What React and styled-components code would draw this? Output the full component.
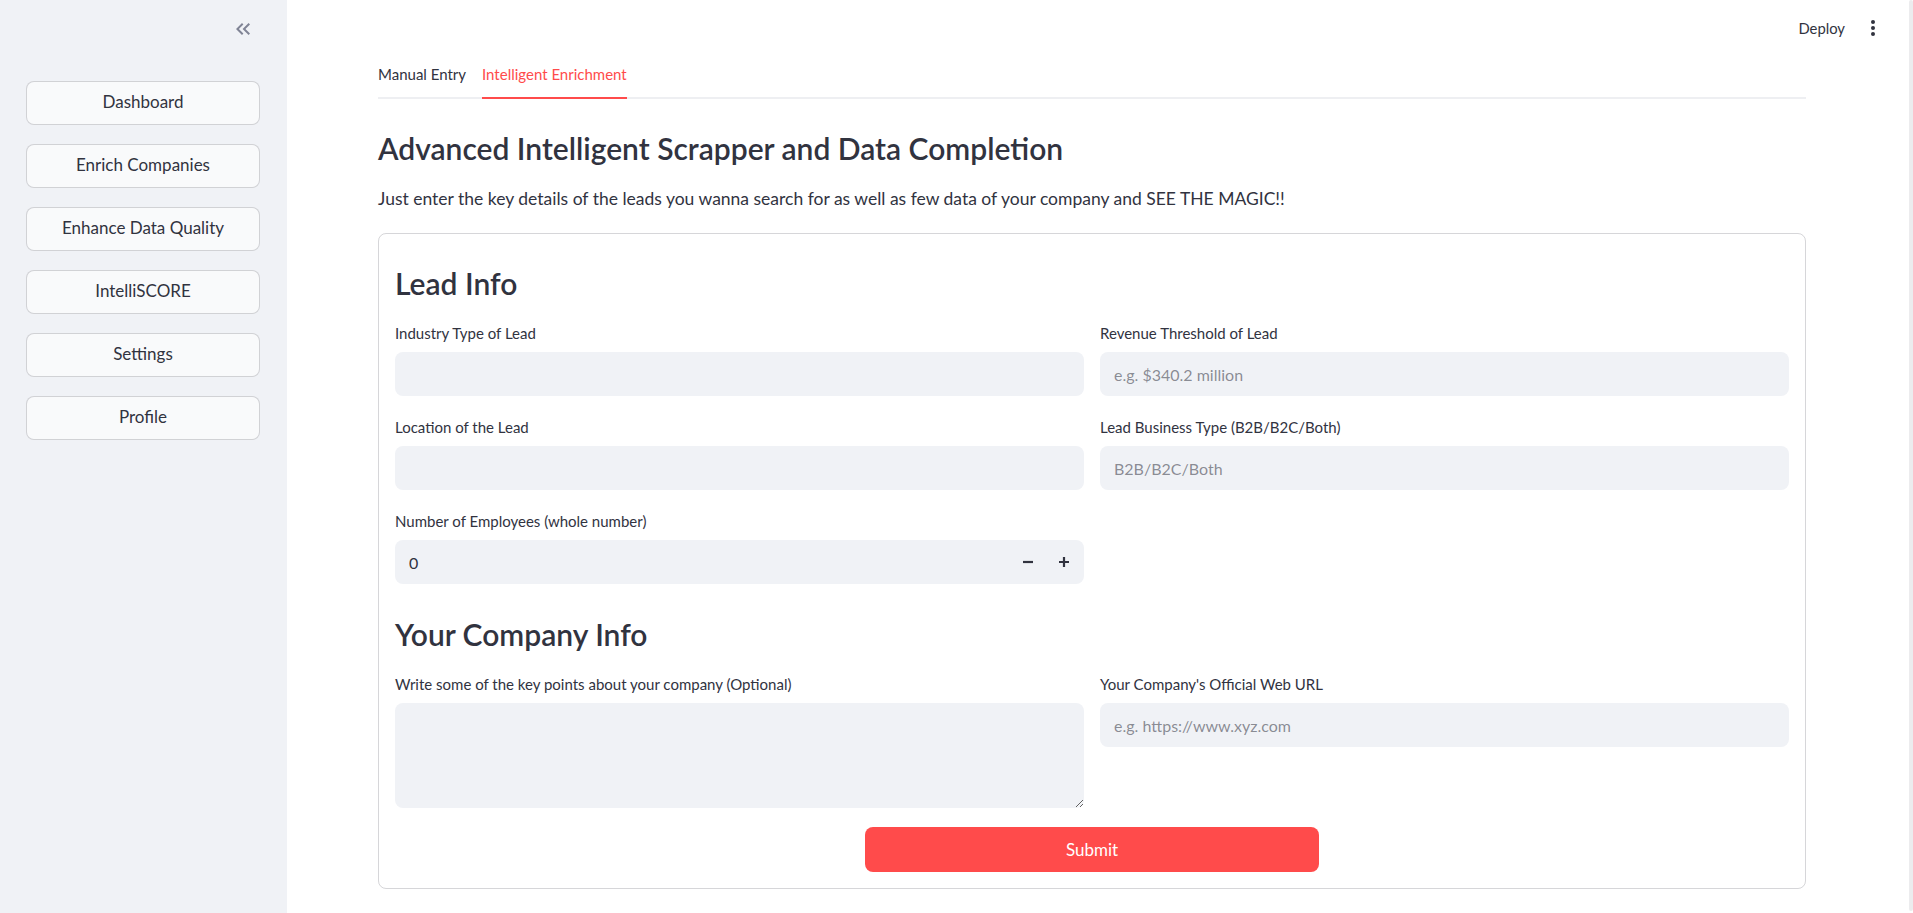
import styled, { createGlobalStyle } from 'styled-components';

const GlobalStyle = createGlobalStyle`
  html, body {
    margin: 0;
    padding: 0;
    background: #ffffff;
    overflow: hidden;
  }
  body {
    font-family: Lato, "Noto Sans", sans-serif;
    color: #31333f;
  }
  * { box-sizing: border-box; }
`;

const Shell = styled.div`
  display: flex;
  height: 100vh;
  overflow: hidden;
`;

const Sidebar = styled.aside`
  width: 287px;
  flex-shrink: 0;
  background: #f0f2f6;
  padding: 0 27px 0 26px;
  display: flex;
  flex-direction: column;
`;

const CollapseRow = styled.div`
  height: 81px;
  display: flex;
  justify-content: flex-end;
  align-items: flex-start;
  padding-top: 17px;
  padding-right: 5px;
`;

const IconButton = styled.button`
  border: none;
  background: transparent;
  padding: 0;
  display: flex;
  cursor: pointer;
  color: ${(p) => p.$color || '#808495'};
`;

const Nav = styled.nav`
  display: flex;
  flex-direction: column;
  gap: 19px;
`;

const NavButton = styled.button`
  height: 44px;
  width: 100%;
  background: #f9fafb;
  border: 1px solid rgba(49, 51, 63, 0.2);
  border-radius: 8px;
  font-family: inherit;
  font-size: 17px;
  line-height: 20px;
  padding: 0 0 2px;
  color: #31333f;
  cursor: pointer;
`;

const Main = styled.main`
  flex: 1;
  position: relative;
  display: flex;
  flex-direction: column;
  background: #ffffff;
`;

const Header = styled.header`
  height: 56px;
  display: flex;
  align-items: center;
  justify-content: flex-end;
  gap: 16px;
  padding-right: 28px;
`;

const DeployLink = styled.span`
  font-size: 14.8px;
  color: #31333f;
`;

const ScrollThumb = styled.div`
  position: absolute;
  right: 0;
  top: 0;
  bottom: 2px;
  width: 4px;
  border-radius: 2px;
  background: #ececee;
`;

const Content = styled.div`
  padding: 0 107px 0 91px;
  display: flex;
  flex-direction: column;
`;

const TabList = styled.div`
  height: 43px;
  display: flex;
  gap: 16px;
  border-bottom: 2px solid #eeeff2;
`;

const Tab = styled.div`
  height: 43px;
  display: flex;
  align-items: center;
  padding-bottom: 6px;
  margin-bottom: -2px;
  font-size: 15px;
  color: ${(p) => (p.$active ? '#ff4b4b' : '#31333f')};
  border-bottom: 2px solid ${(p) => (p.$active ? '#ff4b4b' : 'transparent')};
`;

const Title = styled.h2`
  margin: 31px 0 0;
  font-size: 30px;
  line-height: 36px;
  font-weight: 600;
  color: #31333f;
`;

const Lead = styled.p`
  margin: 20px 0 0;
  font-size: 17.5px;
  line-height: 26px;
`;

const Form = styled.form`
  margin-top: 21px;
  border: 1px solid rgba(49, 51, 63, 0.2);
  border-radius: 8px;
  padding: 16px;
  display: flex;
  flex-direction: column;
`;

const SectionTitle = styled.h3`
  margin: ${(p) => (p.$first ? '15px' : '32px')} 0 22px;
  font-size: 30px;
  line-height: 36px;
  font-weight: 600;
  color: #31333f;
`;

const Columns = styled.div`
  display: grid;
  grid-template-columns: 1fr 1fr;
  column-gap: 16px;
  align-items: start;
`;

const Column = styled.div`
  display: flex;
  flex-direction: column;
  gap: 21px;
`;

const Field = styled.label`
  display: flex;
  flex-direction: column;
`;

const Label = styled.span`
  font-size: 15px;
  line-height: 20px;
  margin-bottom: 9px;
  color: #31333f;
`;

const TextInput = styled.input`
  height: 44px;
  width: 100%;
  border: none;
  border-radius: 8px;
  background: #f0f2f6;
  padding: 0 14px;
  font-family: inherit;
  font-size: 16px;
  color: #31333f;
  outline: none;
  &::placeholder { color: rgba(49, 51, 63, 0.55); }
`;

const NumberBox = styled.div`
  height: 44px;
  display: flex;
  align-items: center;
  border-radius: 8px;
  background: #f0f2f6;
  padding: 0 2px 0 14px;
`;

const NumberValue = styled.input`
  flex: 1;
  border: none;
  background: transparent;
  font-family: inherit;
  font-size: 16px;
  color: #31333f;
  outline: none;
  padding: 0;
`;

const StepButton = styled.button`
  width: 36px;
  height: 44px;
  border: none;
  background: transparent;
  display: flex;
  align-items: center;
  justify-content: center;
  color: #31333f;
  padding: 0;
`;

const TextArea = styled.textarea`
  height: 105px;
  width: 100%;
  border: none;
  border-radius: 8px;
  background: #f0f2f6;
  padding: 12px 14px;
  font-family: inherit;
  font-size: 16px;
  color: #31333f;
  outline: none;
  resize: vertical;
`;

const SubmitRow = styled.div`
  margin-top: 19px;
  display: grid;
  grid-template-columns: 1fr 1fr 1fr;
  column-gap: 16px;
`;

const SubmitButton = styled.button`
  grid-column: 2;
  height: 45px;
  border: none;
  border-radius: 8px;
  background: #ff4b4b;
  color: #ffffff;
  font-family: inherit;
  font-size: 17px;
  cursor: pointer;
`;

const navItems = ['Dashboard', 'Enrich Companies', 'Enhance Data Quality', 'IntelliSCORE', 'Settings', 'Profile'];

function DoubleChevron() {
  return (
    <svg width="24" height="24" viewBox="0 0 24 24" fill="currentColor">
      <path d="M17.59 18L19 16.59 14.42 12 19 7.41 17.59 6l-6 6z" />
      <path d="M11 18l1.41-1.41L7.83 12l4.58-4.59L11 6l-6 6z" />
    </svg>
  );
}

function MoreVert() {
  return (
    <svg width="24" height="24" viewBox="0 0 24 24" fill="currentColor">
      <circle cx="12" cy="6" r="2" />
      <circle cx="12" cy="12" r="2" />
      <circle cx="12" cy="18" r="2" />
    </svg>
  );
}

function Minus() {
  return (
    <svg width="12" height="12" viewBox="0 0 12 12">
      <path d="M1 6h10" stroke="currentColor" strokeWidth="2.2" />
    </svg>
  );
}

function Plus() {
  return (
    <svg width="12" height="12" viewBox="0 0 12 12">
      <path d="M1 6h10M6 1v10" stroke="currentColor" strokeWidth="2.2" />
    </svg>
  );
}

export default function App() {
  return (
    <>
      <GlobalStyle />
      <Shell>
        <Sidebar>
          <CollapseRow>
            <IconButton aria-label="Collapse sidebar">
              <DoubleChevron />
            </IconButton>
          </CollapseRow>
          <Nav>
            {navItems.map((item) => (
              <NavButton key={item}>{item}</NavButton>
            ))}
          </Nav>
        </Sidebar>

        <Main>
          <Header>
            <DeployLink>Deploy</DeployLink>
            <IconButton $color="#31333f" aria-label="Menu">
              <MoreVert />
            </IconButton>
          </Header>

          <Content>
            <TabList>
              <Tab>Manual Entry</Tab>
              <Tab $active>Intelligent Enrichment</Tab>
            </TabList>

            <Title>Advanced Intelligent Scrapper and Data Completion</Title>
            <Lead>
              Just enter the key details of the leads you wanna search for as well as few data of your company and SEE THE MAGIC!!
            </Lead>

            <Form onSubmit={(e) => e.preventDefault()}>
              <SectionTitle $first>Lead Info</SectionTitle>
              <Columns>
                <Column>
                  <Field>
                    <Label>Industry Type of Lead</Label>
                    <TextInput />
                  </Field>
                  <Field>
                    <Label>Location of the Lead</Label>
                    <TextInput />
                  </Field>
                  <Field>
                    <Label>Number of Employees (whole number)</Label>
                    <NumberBox>
                      <NumberValue defaultValue="0" />
                      <StepButton type="button" aria-label="Decrement"><Minus /></StepButton>
                      <StepButton type="button" aria-label="Increment"><Plus /></StepButton>
                    </NumberBox>
                  </Field>
                </Column>
                <Column>
                  <Field>
                    <Label>Revenue Threshold of Lead</Label>
                    <TextInput placeholder="e.g. $340.2 million" />
                  </Field>
                  <Field>
                    <Label>Lead Business Type (B2B/B2C/Both)</Label>
                    <TextInput placeholder="B2B/B2C/Both" />
                  </Field>
                </Column>
              </Columns>

              <SectionTitle>Your Company Info</SectionTitle>
              <Columns>
                <Field>
                  <Label>Write some of the key points about your company (Optional)</Label>
                  <TextArea />
                </Field>
                <Field>
                  <Label>Your Company's Official Web URL</Label>
                  <TextInput placeholder="e.g. https://www.xyz.com" />
                </Field>
              </Columns>

              <SubmitRow>
                <SubmitButton type="submit">Submit</SubmitButton>
              </SubmitRow>
            </Form>
          </Content>
          <ScrollThumb />
        </Main>
      </Shell>
    </>
  );
}
